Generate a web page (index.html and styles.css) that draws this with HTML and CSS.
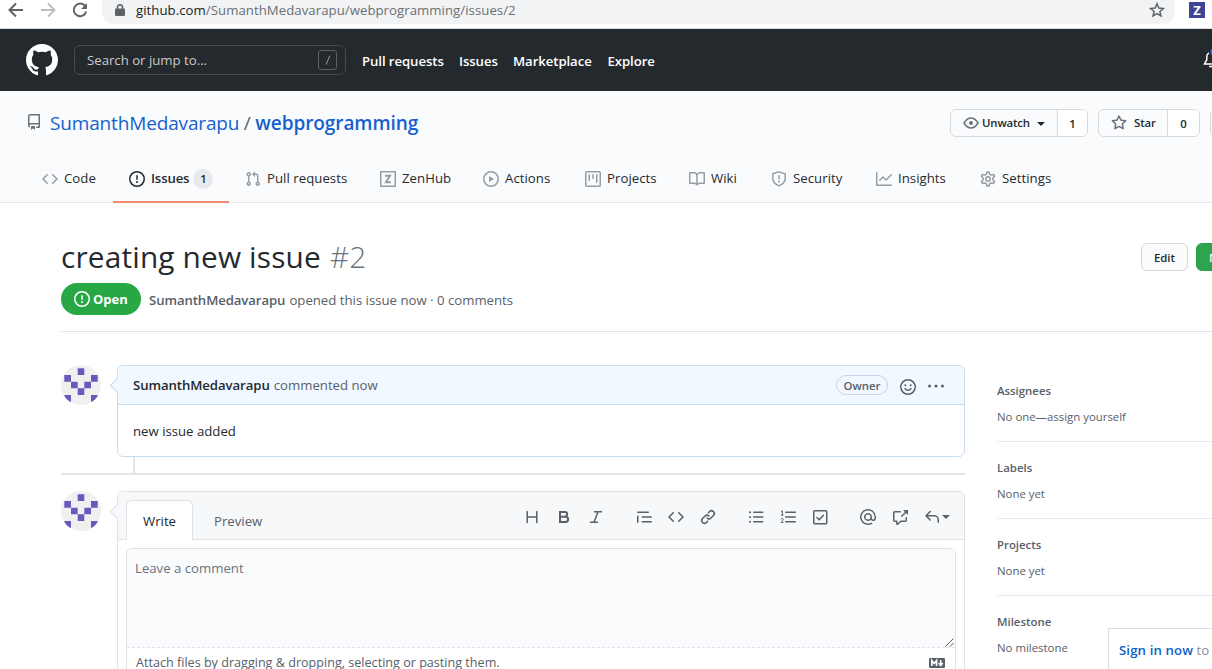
FILE: index.html
```html
<!DOCTYPE html>
<html lang="en">
<head>
<meta charset="utf-8">
<title>creating new issue · Issue #2</title>
<link rel="stylesheet" href="styles.css">
</head>
<body>
<svg class="defs" width="0" height="0">
  <symbol id="issue" viewBox="0 0 16 16"><path fill-rule="evenodd" d="M8 1.5a6.5 6.5 0 100 13 6.5 6.5 0 000-13zM0 8a8 8 0 1116 0A8 8 0 010 8zm9 3a1 1 0 11-2 0 1 1 0 012 0zm-.25-6.25a.75.75 0 00-1.5 0v3.5a.75.75 0 001.5 0v-3.5z"/></symbol>
  <symbol id="code" viewBox="0 0 16 16"><path fill-rule="evenodd" d="M4.72 3.22a.75.75 0 011.06 1.06L2.06 8l3.72 3.72a.75.75 0 11-1.06 1.06L.47 8.53a.75.75 0 010-1.06l4.25-4.25zm6.56 0a.75.75 0 10-1.06 1.06L13.94 8l-3.72 3.72a.75.75 0 101.06 1.06l4.25-4.25a.75.75 0 000-1.06l-4.25-4.25z"/></symbol>
  <symbol id="star" viewBox="0 0 16 16"><path fill-rule="evenodd" d="M8 .25a.75.75 0 01.673.418l1.882 3.815 4.21.612a.75.75 0 01.416 1.279l-3.046 2.97.719 4.192a.75.75 0 01-1.088.791L8 12.347l-3.766 1.98a.75.75 0 01-1.088-.79l.72-4.194L.818 6.374a.75.75 0 01.416-1.28l4.21-.611L7.327.668A.75.75 0 018 .25zm0 2.445L6.615 5.5a.75.75 0 01-.564.41l-3.097.45 2.24 2.184a.75.75 0 01.216.664l-.528 3.084 2.769-1.456a.75.75 0 01.698 0l2.77 1.456-.53-3.084a.75.75 0 01.216-.664l2.24-2.183-3.096-.45a.75.75 0 01-.564-.41L8 2.694v.001z"/></symbol>
  <symbol id="identicon" viewBox="0 0 40 40"><circle cx="20" cy="20" r="20" fill="#f0f0f0"/><clipPath id="round"><circle cx="20" cy="20" r="20"/></clipPath><path clip-path="url(#round)" fill="#6c57bd" d="M16.7 3.3h6.6V10h-6.6zM3.3 10H10v6.7H3.3zM30 10h6.7v6.7H30zM10 16.7h6.7v6.6H10zM23.3 16.7H30v6.6h-6.7zM16.7 23.3h6.6V30h-6.6zM3.3 30H10v6.7H3.3zM30 30h6.7v6.7H30z"/></symbol>
</svg>

<div class="browser">
  <svg class="b-back" width="16" height="16" viewBox="0 0 16 16"><path class="ln2" d="M15 8H2M8 1.5L1.5 8 8 14.5"/></svg>
  <svg class="b-fwd" width="16" height="16" viewBox="0 0 16 16"><path class="ln2" d="M1 8h13M8 1.5L14.500 8 8 14.5"/></svg>
  <svg class="b-reload" width="16" height="16" viewBox="0 0 16 16"><path class="ln2" d="M13.200 4.200A6.300 6.300 0 1 0 14.200 9.500"/><path d="M15 1v6H9z"/></svg>
  <div class="omnibox">
    <svg class="lock" width="10" height="12" viewBox="0 0 10 12"><path d="M1 4.500h8a1 1 0 0 1 1 1V11a1 1 0 0 1-1 1H1a1 1 0 0 1-1-1V5.500a1 1 0 0 1 1-1z"/><path class="ln" d="M2.500 5V3a2.500 2.300 0 0 1 5 0v2"/></svg>
    <span class="url"><b>github.com</b>/SumanthMedavarapu/webprogramming/issues/2</span>
    <svg class="b-star" width="16" height="16" viewBox="0 0 16 16"><path class="ln" d="M8 1.800l1.800 4.300 4.600.4-3.500 3 1.100 4.500L8 11.600 4 14l1.100-4.500-3.500-3 4.600-.4z"/></svg>
  </div>
  <span class="ext">Z</span>
</div>

<header class="top">
  <svg class="mark" width="32" height="32" viewBox="0 0 16 16"><path d="M8 0C3.580 0 0 3.580 0 8c0 3.540 2.290 6.530 5.470 7.590.4.070.550-.170.550-.380 0-.190-.010-.820-.010-1.490-2.010.370-2.530-.490-2.690-.940-.090-.230-.480-.940-.820-1.130-.280-.150-.680-.520-.010-.530.630-.010 1.080.580 1.230.820.720 1.210 1.870.870 2.330.660.070-.520.280-.870.510-1.070-1.780-.200-3.640-.890-3.640-3.950 0-.870.310-1.590.820-2.150-.080-.200-.360-1.020.080-2.120 0 0 .670-.210 2.200.820.640-.180 1.320-.270 2-.270.680 0 1.360.090 2 .270 1.530-1.040 2.200-.820 2.200-.820.440 1.100.160 1.920.080 2.120.510.560.820 1.270.820 2.150 0 3.070-1.870 3.750-3.650 3.950.290.250.540.730.540 1.480 0 1.070-.010 1.930-.010 2.200 0 .210.150.460.550.380A8.013 8.013 0 0016 8c0-4.420-3.580-8-8-8z"/></svg>
  <div class="search"><span>Search or jump to...</span><kbd><svg width="8" height="12" viewBox="0 0 8 12"><path d="M6 1.500L2 10.500"/></svg></kbd></div>
  <nav class="topnav"><a>Pull requests</a><a>Issues</a><a>Marketplace</a><a>Explore</a></nav>
  <svg class="bell" width="16" height="20" viewBox="0 0 16 20"><path d="M8 3.500a4.200 4.200 0 0 0-4.200 4.200v3L1.500 15h13l-2.300-4.300v-3A4.200 4.200 0 0 0 8 3.500zM6 17.500h4"/><circle cx="11" cy="3" r="4.500"/></svg>
</header>

<div class="repohead">
  <div class="repoline">
    <svg class="repoicon" width="16" height="16" viewBox="0 0 16 16"><path fill-rule="evenodd" d="M2 2.500A2.500 2.500 0 014.500 0h8.750a.75.75 0 01.75.75v12.500a.75.75 0 01-.75.75h-2.500a.75.75 0 110-1.500h1.750v-2h-8a1 1 0 00-.714 1.700.75.75 0 01-1.072 1.050A2.495 2.495 0 012 11.500v-9zm10.500-1V9h-8c-.356 0-.694.074-1 .208V2.500a1 1 0 011-1h8zM5 12.250v3.250a.25.25 0 00.4.200l1.450-1.087a.25.25 0 01.3 0L8.600 15.700a.25.25 0 00.4-.200v-3.250a.25.25 0 00-.25-.25h-3.500a.25.25 0 00-.25.25z"/></svg>
    <span class="owner">SumanthMedavarapu</span><span class="slash">/</span><span class="repo">webprogramming</span>
    <div class="actions">
      <div class="btngroup watch"><span class="main"><svg width="16" height="16" viewBox="0 0 16 16"><path class="ln" d="M1 8C3 4.800 5.400 3 8 3s5 1.800 7 5c-2 3.200-4.400 5-7 5S3 11.200 1 8z"/><circle cx="8" cy="8" r="2"/></svg><span class="lbl">Unwatch</span><i class="caret"></i></span><span class="count">1</span></div>
      <div class="btngroup starbtn"><span class="main"><svg width="16" height="16"><use href="#star"/></svg><span class="lbl">Star</span></span><span class="count">0</span></div>
      <div class="btngroup fork"></div>
    </div>
  </div>
  <nav class="tabs">
    <a><svg width="16" height="16"><use href="#code"/></svg><span>Code</span></a>
    <a class="on"><svg width="16" height="16"><use href="#issue"/></svg><span>Issues</span><em>1</em></a>
    <a><svg width="16" height="16" viewBox="0 0 16 16"><path fill-rule="evenodd" d="M7.177 3.073L9.573.677A.25.25 0 0110 .854v4.792a.25.25 0 01-.427.177L7.177 3.427a.25.25 0 010-.354zM3.750 2.500a.75.75 0 100 1.500.75.75 0 000-1.500zm-2.250.75a2.250 2.250 0 113 2.122v5.256a2.251 2.251 0 11-1.500 0V5.372A2.250 2.250 0 011.500 3.250zM11 2.500h-1V4h1a1 1 0 011 1v5.628a2.251 2.251 0 101.500 0V5A2.500 2.500 0 0011 2.500zm1 10.250a.75.75 0 111.500 0 .75.75 0 01-1.500 0zM3.750 12a.75.75 0 100 1.500.75.75 0 000-1.500z"/></svg><span>Pull requests</span></a>
    <a><svg width="16" height="16" viewBox="0 0 16 16"><path class="ln" d="M.75.75h14.500v14.500H.75z"/><path class="ln2" d="M5 4.800h5L6 11.200h5"/></svg><span>ZenHub</span></a>
    <a><svg width="16" height="16" viewBox="0 0 16 16"><path fill-rule="evenodd" d="M1.500 8a6.500 6.500 0 1113 0 6.500 6.500 0 01-13 0zM8 0a8 8 0 100 16A8 8 0 008 0zM6.379 5.227A.25.25 0 006 5.442v5.117a.25.25 0 00.379.214l4.264-2.559a.25.25 0 000-.428L6.379 5.227z"/></svg><span>Actions</span></a>
    <a><svg width="16" height="16" viewBox="0 0 16 16"><rect class="ln" x=".75" y=".75" width="14.500" height="14.500" rx="1"/><path class="ln" stroke-linecap="round" d="M4.250 3.750v5.500M8 3.750v3.500M11.750 3.750v7.500"/></svg><span>Projects</span></a>
    <a><svg width="16" height="16" viewBox="0 0 16 16"><path fill-rule="evenodd" d="M0 1.750A.75.75 0 01.75 1h4.253c1.227 0 2.317.590 3 1.501A3.744 3.744 0 0111.006 1h4.245a.75.75 0 01.75.75v10.500a.75.75 0 01-.75.75h-4.507a2.250 2.250 0 00-1.591.659l-.622.621a.75.75 0 01-1.060 0l-.622-.621A2.250 2.250 0 005.258 13H.75a.75.75 0 01-.75-.75V1.750zm8.755 3a2.250 2.250 0 012.250-2.250H14.500v9h-3.757c-.710 0-1.400.201-1.992.572l.004-7.322zm-1.504 7.324l.004-5.073-.002-2.253A2.250 2.250 0 005.003 2.500H1.500v9h3.757a3.750 3.750 0 011.994.574z"/></svg><span>Wiki</span></a>
    <a><svg width="16" height="16" viewBox="0 0 16 16"><path class="ln" d="M8 .9l6.200 2V7c0 3.400-1.600 6-6.200 7.900C3.400 13 1.800 10.400 1.800 7V2.900z"/><path class="ln" stroke-linecap="round" d="M8 4.750v3"/><circle cx="8" cy="10.500" r="1"/></svg><span>Security</span></a>
    <a><svg width="16" height="16" viewBox="0 0 16 16"><path fill-rule="evenodd" d="M1.500 1.750a.75.75 0 00-1.500 0v12.500c0 .414.336.75.75.75h14.500a.75.75 0 000-1.500H1.500V1.750zm14.280 2.530a.75.75 0 00-1.060-1.060L10 7.940 7.530 5.470a.75.75 0 00-1.060 0L3.220 8.720a.75.75 0 001.060 1.060L7 7.060l2.470 2.470a.75.75 0 001.060 0l5.250-5.250z"/></svg><span>Insights</span></a>
    <a><svg width="16" height="16" viewBox="0 0 16 16"><path class="ln" stroke-linejoin="round" d="M7 .9h2l.6 2.300 1.600.9 2.300-.6 1.100 1.700-1.700 1.700v2.200l1.700 1.700-1.100 1.700-2.300-.6-1.600.9L9 15.100H7l-.6-2.300-1.600-.9-2.300.6-1.100-1.700 1.700-1.700V6.900L1.400 5.200l1.100-1.700 2.300.6 1.600-.9z"/><circle class="ln" cx="8" cy="8" r="2.250"/></svg><span>Settings</span></a>
  </nav>
</div>

<main class="page">
  <section class="issuehead">
    <div class="titleline">
      <h1>creating new issue</h1><span class="num">#2</span>
      <span class="edit">Edit</span><span class="newissue">New issue</span>
    </div>
    <div class="metaline">
      <span class="state"><svg width="16" height="16"><use href="#issue"/></svg>Open</span>
      <span class="meta-user">SumanthMedavarapu</span><span class="meta-rest">opened this issue now · 0 comments</span>
    </div>
  </section>

  <div class="cols">
    <section class="thread">
      <div class="row">
        <svg class="avatar" width="40" height="40"><use href="#identicon"/></svg>
        <article class="box comment">
          <i class="arrow"></i>
          <div class="comment-head"><b>SumanthMedavarapu</b><span class="when">commented now</span>
            <span class="badge">Owner</span>
            <svg class="smile" width="16" height="16" viewBox="0 0 16 16"><circle class="ln" cx="8" cy="8" r="7.250"/><path class="ln" stroke-linecap="round" d="M5 9.700c1.500 2.200 4.500 2.200 6 0"/><circle cx="5.300" cy="6.300" r="1"/><circle cx="10.700" cy="6.300" r="1"/></svg>
            <svg class="dots" width="16" height="16" viewBox="0 0 16 16"><circle cx="1.500" cy="8" r="1.500"/><circle cx="8" cy="8" r="1.500"/><circle cx="14.500" cy="8" r="1.500"/></svg>
          </div>
          <p>new issue added</p>
        </article>
      </div>
      <div class="stem"></div>
      <div class="row reply">
        <svg class="avatar" width="40" height="40"><use href="#identicon"/></svg>
        <div class="box form">
          <i class="arrow"></i>
          <div class="form-head">
            <span class="write">Write</span><span class="preview">Preview</span>
            <div class="tools">
              <svg width="16" height="16" viewBox="0 0 16 16"><path class="ln" stroke-linecap="round" d="M3.200 2.500v11M12.800 2.500v11M3.200 8h9.600"/></svg>
              <svg width="16" height="16" viewBox="0 0 16 16"><path class="ln2" d="M4 3h4.800a2.350 2.350 0 0 1 0 4.700H4zM4 7.700h5.500a2.650 2.650 0 0 1 0 5.300H4z"/></svg>
              <svg width="16" height="16" viewBox="0 0 16 16"><path class="ln" stroke-linecap="round" d="M6.500 2.700h7M2.500 13.300h7M10 2.700L6 13.300"/></svg>
              <svg class="gap" width="16" height="16" viewBox="0 0 16 16"><path class="ln" stroke-linecap="round" d="M1.750 3.250h10.500M6.250 8h9M6.250 12.750h9M1.750 7.250v6"/></svg>
              <svg width="16" height="16"><use href="#code"/></svg>
              <svg width="16" height="16" viewBox="0 0 16 16"><path fill-rule="evenodd" d="M7.775 3.275a.75.75 0 001.060 1.060l1.250-1.250a2 2 0 112.830 2.830l-2.500 2.500a2 2 0 01-2.830 0 .75.75 0 00-1.060 1.060 3.500 3.500 0 004.950 0l2.500-2.500a3.500 3.500 0 00-4.950-4.950l-1.250 1.250zm-4.690 9.640a2 2 0 010-2.830l2.500-2.500a2 2 0 012.830 0 .75.75 0 001.060-1.060 3.500 3.500 0 00-4.950 0l-2.500 2.500a3.500 3.500 0 004.950 4.950l1.250-1.250a.75.75 0 00-1.060-1.060l-1.250 1.250a2 2 0 01-2.830 0z"/></svg>
              <svg class="gap" width="16" height="16" viewBox="0 0 16 16"><path class="ln" stroke-linecap="round" d="M5.750 3.250h9M5.750 8h9M5.750 12.750h9"/><circle cx="2" cy="3.250" r="1"/><circle cx="2" cy="8" r="1"/><circle cx="2" cy="12.750" r="1"/></svg>
              <svg width="16" height="16" viewBox="0 0 16 16"><path class="ln" stroke-linecap="round" d="M5.750 3.250h9.500M5.750 8h9.500M5.750 12.750h9.500"/><path class="thin" d="M1 2.500l1.300-.8V6M1 6.100h2.600M1 10.300c.4-1.300 2.400-1 2.200.2-.1.900-1.500 1.900-2.100 2.900h2.400"/></svg>
              <svg width="16" height="16" viewBox="0 0 16 16"><rect class="ln" x="1.750" y="1.750" width="13" height="13" rx="1"/><path class="ln" stroke-linecap="round" stroke-linejoin="round" d="M5 8.500l2.200 2.200 4.300-4.500"/></svg>
              <svg class="gap" width="16" height="16" viewBox="0 0 16 16"><path fill-rule="evenodd" d="M4.750 2.370a6.500 6.500 0 006.500 11.260.75.75 0 01.75 1.298 8 8 0 113.994-7.273.754.754 0 01.006.095v1.500a2.750 2.750 0 01-5.072 1.475A4 4 0 1112 8v1.250a1.250 1.250 0 002.500 0V7.867a6.500 6.500 0 00-9.750-5.496V2.370zM10.500 8a2.500 2.500 0 10-5 0 2.500 2.500 0 005 0z"/></svg>
              <svg width="16" height="16" viewBox="0 0 16 16"><path fill-rule="evenodd" d="M16 1.250v4.146a.25.25 0 01-.427.177L14.030 4.030l-3.750 3.750a.75.75 0 11-1.060-1.060l3.750-3.750-1.543-1.543A.25.25 0 0111.604 1h4.146a.25.25 0 01.25.25zM2.750 3.500a.25.25 0 00-.25.25v7.500c0 .138.112.25.25.25h2a.75.75 0 01.75.75v2.190l2.720-2.720a.75.75 0 01.530-.220h4.500a.25.25 0 00.25-.25v-2.500a.75.75 0 111.500 0v2.500A1.750 1.750 0 0113.250 13H9.060l-2.573 2.573A1.457 1.457 0 014 14.543V13H2.750A1.750 1.750 0 011 11.250v-7.500C1 2.784 1.784 2 2.750 2h5.500a.75.75 0 010 1.500h-5.500z"/></svg>
              <svg width="16" height="16" viewBox="0 0 16 16"><path fill-rule="evenodd" d="M6.780 1.970a.75.75 0 010 1.060L3.810 6h6.440A4.750 4.750 0 0115 10.750v2.500a.75.75 0 01-1.500 0v-2.500a3.250 3.250 0 00-3.250-3.250H3.810l2.970 2.970a.75.75 0 11-1.060 1.060L1.470 7.280a.75.75 0 010-1.060l4.250-4.250a.75.75 0 011.060 0z"/></svg>
              <i class="caret"></i>
            </div>
          </div>
          <div class="field">
            <div class="textarea"><span class="ph">Leave a comment</span><svg class="grip" width="9" height="9" viewBox="0 0 9 9"><path d="M.5 8.500l8-8M5 8.500L8.500 5"/></svg></div>
            <div class="attach"><span>Attach files by dragging &amp; dropping, selecting or pasting them.</span>
              <svg width="16" height="10" viewBox="0 0 16 10"><rect width="16" height="10" rx="1.200"/><path class="md" d="M2.800 8V2.500L5.200 5.500 7.600 2.500V8M11.700 2v4.500M9.700 5l2 2.500 2-2.500"/></svg></div>
          </div>
        </div>
      </div>
    </section>

    <aside class="side">
      <div class="item"><b>Assignees</b><span>No one—assign yourself</span></div>
      <div class="item"><b>Labels</b><span>None yet</span></div>
      <div class="item"><b>Projects</b><span>None yet</span></div>
      <div class="item"><b>Milestone</b><span>No milestone</span></div>
    </aside>
  </div>
</main>

<div class="signin"><b>Sign in now</b> to</div>
</body>
</html>
```

FILE: styles.css
```css
* { box-sizing: border-box; }
html, body { margin: 0; width: 1212px; height: 669px; overflow: hidden; }
body { position: relative; background: #fff; color: #24292e; font: 13.2px/20px "Open Sans", "Noto Sans", sans-serif; white-space: nowrap; }
svg { display: block; flex: none; fill: currentColor; overflow: visible; }
.defs { position: absolute; }
.ln { fill: none; stroke: currentColor; stroke-width: 1.5; }
.ln2 { fill: none; stroke: currentColor; stroke-width: 2; }
.thin { fill: none; stroke: currentColor; stroke-width: 1; }
b { font-weight: 600; }
.caret { flex: none; width: 0; height: 0; border: 4px solid transparent; border-top-color: currentColor; border-bottom: 0; }

.browser { display: flex; height: 29px; padding-left: 8px; border-bottom: 1px solid #d9dbde; color: #5f6368; }
.browser > svg { margin-top: 2px; }
.b-fwd { margin-left: 16px; color: #bcbec1; }
.b-reload { margin-left: 16px; }
.omnibox { display: flex; flex: none; width: 1073px; height: 24px; margin-left: 14px; padding: 0 10px 0 13px; border-radius: 0 0 12px 12px; background: #f1f3f4; }
.lock { margin-top: 4px; }
.url { margin-left: 11px; line-height: 21px; letter-spacing: .05px; color: #6b6f74; }
.url b { font-weight: 400; color: #202124; }
.b-star { margin: 2px 0 0 auto; }
.ext { flex: none; width: 16px; height: 16px; margin: 2px 0 0 14px; background: #3f4496; color: #fff; font: 700 13px/16px "Open Sans", sans-serif; text-align: center; }

.top { display: flex; align-items: center; height: 62px; padding-left: 26px; background: #24292e; color: #fff; }
.search { display: flex; flex: none; align-items: center; justify-content: space-between; width: 272px; height: 30px; margin-left: 16px; padding: 0 8px 0 12px; border: 1px solid #444a50; border-radius: 6px; color: #c8cacc; }
kbd { display: grid; place-items: center; width: 19px; height: 20px; border: 1px solid #5a6068; border-radius: 3px; }
kbd svg { fill: none; stroke: #999da1; }
.topnav { display: grid; flex: none; grid-template-columns: 97px 54px 94.5px 60px; margin: 2px 0 0 16px; font-weight: 600; letter-spacing: -.08px; }
.bell { margin: -2px 0 0 535px; fill: none; stroke: #fff; stroke-width: 1.5; }
.bell circle { fill: #1074e7; stroke: #24292e; }

.repohead { height: 112px; border-bottom: 1px solid #e1e4e8; background: #fafbfc; }
.repoline { display: flex; align-items: center; height: 63px; padding-left: 26px; font-size: 19px; line-height: 28px; color: #1560cf; }
.repoicon { margin-top: -1px; color: #6a737d; }
.owner { margin-left: 8px; letter-spacing: -.15px; }
.slash { width: 16px; text-align: center; color: #586069; }
.repo { font-weight: 600; letter-spacing: -.07px; }
.actions { display: flex; margin-left: auto; width: 262px; font-size: 11.4px; color: #24292e; }
.btngroup { display: flex; flex: none; height: 28px; line-height: 27px; border: 1px solid #d6d9dc; border-radius: 6px; background: #fafbfc; overflow: hidden; font-weight: 600; }
.btngroup svg { color: #6a737d; }
.main { display: flex; align-items: center; padding-left: 12px; }
.count { flex: 1; border-left: 1px solid #d6d9dc; background: #fff; text-align: center; }
.watch { width: 138px; }
.watch .main { width: 106px; }
.watch .lbl { width: 47px; margin-left: 3px; letter-spacing: -.15px; }
.watch .caret { margin: 3px 0 0 8px; }
.starbtn { width: 102px; margin-left: 10px; }
.starbtn .main { width: 68px; }
.starbtn .lbl { margin-left: 7px; letter-spacing: -.1px; }
.fork { width: 100px; margin-left: 10px; }

.tabs { display: grid; grid-template-columns: 87px 116px 135px 103px 102px 104px 82px 105px 104px 120px; height: 49px; padding-left: 26px; }
.tabs a { display: flex; align-items: center; padding-left: 16px; }
.tabs svg { color: #959da5; }
.tabs span { margin: -2px 0 0 6px; letter-spacing: .04px; }
.tabs .on { border-bottom: 2px solid #f08a72; padding-top: 2px; font-weight: 600; }
.tabs .on span { letter-spacing: -.15px; }
.tabs .on svg { color: #24292e; }
.tabs em { width: 20px; height: 20px; margin-left: 4px; border-radius: 10px; background: #e7e9ec; font: 600 11.3px/20px "Open Sans", sans-serif; text-align: center; }

.page { padding-left: 61px; }
.issuehead { width: 1216px; height: 129px; padding-top: 40px; border-bottom: 1px solid #e1e4e8; }
.titleline { display: flex; height: 28px; }
h1, .num { margin: 0; font-size: 29.8px; font-weight: 400; line-height: 28px; }
h1 { letter-spacing: .17px; }
.num { margin-left: 9px; font-weight: 300; color: #6a737d; }
.edit { width: 47px; height: 28px; margin-left: auto; border: 1px solid #d6d9dc; border-radius: 6px; background: #fafbfc; font-size: 11.4px; font-weight: 600; line-height: 27px; text-align: center; }
.newissue { width: 81px; height: 28px; margin-left: 8px; padding-left: 12px; border: 1px solid #279f43; border-radius: 6px; background: #2ea44f; color: #fff; font-size: 11.4px; font-weight: 600; line-height: 27px; }
.metaline { display: flex; align-items: center; height: 32px; margin-top: 12px; color: #586069; }
.state { display: flex; align-items: center; gap: 3px; width: 80px; height: 32px; padding-left: 13px; border-radius: 16px; background: #28a745; color: #fff; font-weight: 700; font-size: 13px; }
.meta-user { margin: 2px 0 0 8px; font-weight: 600; letter-spacing: -.1px; }
.meta-rest { margin: 2px 0 0 4px; }

.cols { display: flex; }
.thread { flex: none; width: 904px; padding-top: 33px; }
.row { display: flex; justify-content: space-between; }
.box { position: relative; width: 848px; border: 1px solid #c9dcee; border-radius: 6px; background: #fff; }
.arrow { position: absolute; left: -6px; top: 14px; width: 11px; height: 11px; border: 1px solid #c9dcee; border-width: 0 0 1px 1px; background: #f1f8ff; transform: rotate(45deg); }
.comment { height: 92px; }
.comment-head { position: relative; display: flex; align-items: center; height: 39px; padding: 0 20px 0 15px; border-bottom: 1px solid #c9dcee; border-radius: 5px 5px 0 0; background: #f1f8ff; }
.comment-head b { letter-spacing: -.08px; }
.when { margin-left: 4px; color: #586069; }
.badge { width: 52px; height: 20px; margin-left: auto; border: 1px solid #c4d6e8; border-radius: 10px; font-size: 11.4px; font-weight: 600; line-height: 19px; text-align: center; color: #586069; }
.smile { margin: 3px 0 0 12px; color: #586069; }
.dots { margin: 2px 0 0 12px; color: #586069; }
.comment p { margin: 16px 15px; }
.stem { height: 18px; border-bottom: 2px solid #e1e4e8; background: linear-gradient(#e1e4e8, #e1e4e8) 72px 0 / 2px 16px no-repeat; }
.reply { margin-top: 16px; }
.form { height: 300px; border-color: #dfe2e6; }
.form .arrow { background: #f6f8fa; border-color: #dfe2e6; }
.form-head { position: relative; display: flex; height: 48px; padding: 8px 0 0 8px; border-bottom: 1px solid #dfe2e6; border-radius: 5px 5px 0 0; background: #f6f8fa; }
.write { width: 67px; height: 40px; border: 1px solid #dfe2e6; border-bottom: 0; border-radius: 6px 6px 0 0; background: #fff; line-height: 40px; text-align: center; }
.preview { margin-left: 21px; line-height: 42px; color: #586069; }
.tools { display: flex; align-items: center; gap: 16px; height: 34px; margin: 0 14px 0 auto; color: #586069; }
.tools .gap { margin-left: 16px; }
.tools .caret { margin-left: -14px; }
.field { width: 830px; height: 200px; margin: 8px 0 0 8px; border: 1px solid #dfe2e6; border-radius: 6px; }
.textarea { display: flex; justify-content: space-between; align-items: flex-end; height: 99px; padding: 0 1px 0 8px; border-bottom: 1px dashed #dfe2e6; border-radius: 5px 5px 0 0; background: #fafbfc; }
.ph { align-self: flex-start; margin-top: 9px; color: #6a737d; }
.grip { fill: none; stroke: #55585c; }
.attach { display: flex; justify-content: space-between; padding: 5px 10px 0 9px; font-size: 12.6px; color: #586069; }
.attach svg { margin-top: 5px; }
.md { fill: none; stroke: #fff; stroke-width: 1.6; }

.side { flex: none; width: 256px; margin-left: 32px; padding-top: 33px; font-size: 11.4px; line-height: 18px; color: #586069; }
.item { height: 77px; padding-top: 17px; border-bottom: 1px solid #e6e8eb; }
.item b, .item span { display: block; }
.item span { margin-top: 8px; }

.signin { position: absolute; left: 1108px; top: 628px; width: 200px; height: 60px; padding: 11px 0 0 10px; border: 1px solid #dcdfe2; background: #fff; color: #8a9096; }
.signin b { color: #0b62c9; letter-spacing: .12px; }
```
